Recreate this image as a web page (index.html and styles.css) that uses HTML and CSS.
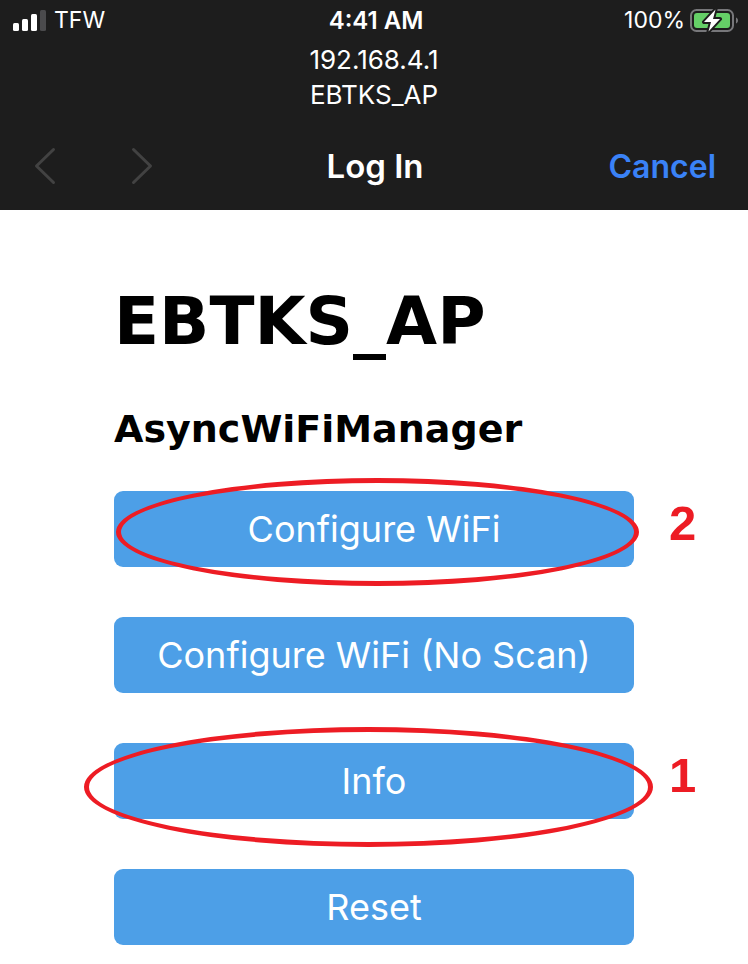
FILE: index.html
```
<!DOCTYPE html>
<html lang="en">
<head>
    <meta charset="UTF-8">
    <meta name="viewport" content="width=device-width, initial-scale=1">
    <title>EBTKS_AP</title>
    <link rel="stylesheet" href="styles.css">
</head>
<body>
    <header class="topbar">
        <!-- Status bar -->
        <div class="status">
            <div class="carrier">
                <svg width="33" height="21" viewBox="0 0 33 21" aria-hidden="true">
                    <rect x="0" y="13" width="6" height="8" rx="1.5" fill="#fff"/>
                    <rect x="9" y="9" width="6" height="12" rx="1.5" fill="#fff"/>
                    <rect x="18" y="4" width="6" height="17" rx="1.5" fill="#fff"/>
                    <rect x="27" y="0" width="6" height="21" rx="1.5" fill="#4b4b4d"/>
                </svg>
                <span>TFW</span>
            </div>
            <div class="time">4:41 AM</div>
            <div class="battery">
                <span>100%</span>
                <svg width="49" height="25" viewBox="0 0 49 25" aria-hidden="true">
                    <rect x="1" y="2" width="42" height="21" rx="5.5" fill="none" stroke="#77777a" stroke-width="2"/>
                    <rect x="4" y="5" width="36" height="15" rx="3" fill="#65cf67"/>
                    <path d="M46 9.5c1.4.6 2 1.7 2 3s-.6 2.4-2 3z" fill="#77777a"/>
                    <path d="M25.500 1.500 14 14h7l-2.500 9.500L30 11h-7z" fill="#fff" stroke="#1d1d1d" stroke-width="4" stroke-linejoin="round" paint-order="stroke"/>
                </svg>
            </div>
        </div>

        <div class="address">
            <div>192.168.4.1</div>
            <div>EBTKS_AP</div>
        </div>

        <!-- Navigation -->
        <nav class="nav">
            <div class="arrows">
                <button type="button" aria-label="Back" disabled>
                    <svg width="22" height="38" viewBox="0 0 22 38"><path d="M19.500 2.500 2.500 19l17 16.500"/></svg>
                </button>
                <button type="button" aria-label="Forward" disabled>
                    <svg width="22" height="38" viewBox="0 0 22 38"><path d="M2.500 2.500 19.500 19l-17 16.500"/></svg>
                </button>
            </div>
            <div class="title">Log In</div>
            <button type="button" class="cancel">Cancel</button>
        </nav>
    </header>

    <main class="portal">
        <h1>EBTKS_AP</h1>
        <h3>AsyncWiFiManager</h3>
        <div class="actions">
            <div class="action">
                <button type="button">Configure WiFi</button>
                <span class="ring ring-wifi"></span>
                <span class="step">2</span>
            </div>
            <div class="action">
                <button type="button">Configure WiFi (No Scan)</button>
            </div>
            <div class="action">
                <button type="button">Info</button>
                <span class="ring ring-info"></span>
                <span class="step">1</span>
            </div>
            <div class="action">
                <button type="button">Reset</button>
            </div>
        </div>
    </main>
</body>
</html>
```
FILE: styles.css
```
* {
    box-sizing: border-box;
    margin: 0;
    padding: 0;
}

body {
    background: #fff;
    color: #000;
    font-family: Inter, "Liberation Sans", sans-serif;
}

button {
    border: 0;
    background: none;
    font-family: inherit;
    cursor: pointer;
}

svg {
    display: block;
}

/* Dark bar at the top */
.topbar {
    background: #1d1d1d;
    color: #fff;
}

.status {
    display: grid;
    grid-template-columns: 1fr auto 1fr;
    align-items: center;
    height: 40px;
    padding: 0 9px 0 13px;
    font-size: 23px;
}

.carrier,
.battery {
    display: flex;
    align-items: center;
    gap: 8px;
}

.battery {
    justify-content: flex-end;
    gap: 5px;
}

.time {
    font-size: 24px;
    font-weight: 600;
}

.address {
    padding: 2px 0 4px;
    font-size: 26px;
    line-height: 35px;
    text-align: center;
}

/* Navigation row */
.nav {
    display: grid;
    grid-template-columns: 1fr auto 1fr;
    align-items: center;
    height: 94px;
    padding: 6px 32px 0 34px;
    font-size: 33px;
}

.arrows {
    display: flex;
    gap: 75px;
}

.arrows path {
    fill: none;
    stroke: #424242;
    stroke-width: 3;
    stroke-linecap: round;
    stroke-linejoin: round;
}

.title {
    font-weight: 600;
}

.cancel {
    justify-self: end;
    color: #3a82f7;
    font-size: 32px;
    font-weight: 600;
}

/* Portal page */
.portal {
    width: 70%;
    max-width: 520px;
    min-width: 480px;
    margin: 0 auto;
    padding: 74px 0 20px;
}

h1,
h3 {
    font-family: Verdana, "DejaVu Sans", sans-serif;
    font-weight: bold;
}

h1 {
    font-size: 66px;
    line-height: 76px;
}

h3 {
    margin-top: 46px;
    font-size: 38px;
    line-height: 46px;
}

.actions {
    display: grid;
    gap: 50px;
    margin-top: 39px;
}

.action {
    position: relative;
}

.action button {
    display: block;
    width: 100%;
    border-radius: 9px;
    background: #4d9fe7;
    color: #fff;
    font-size: 36px;
    line-height: 76px;
}

/* Red marks over the buttons */
.ring {
    position: absolute;
    border: 5px solid #ed1c24;
    border-radius: 50%;
    pointer-events: none;
}

.ring-wifi {
    top: -13px;
    right: -5px;
    bottom: -19px;
    left: 2px;
}

.ring-info {
    top: -16px;
    right: -19px;
    bottom: -28px;
    left: -30px;
}

.step {
    position: absolute;
    top: 4px;
    left: calc(100% + 35px);
    color: #ed1c24;
    font-family: Arial, "Liberation Sans", sans-serif;
    font-size: 49px;
    font-weight: bold;
    line-height: 56px;
}
```
